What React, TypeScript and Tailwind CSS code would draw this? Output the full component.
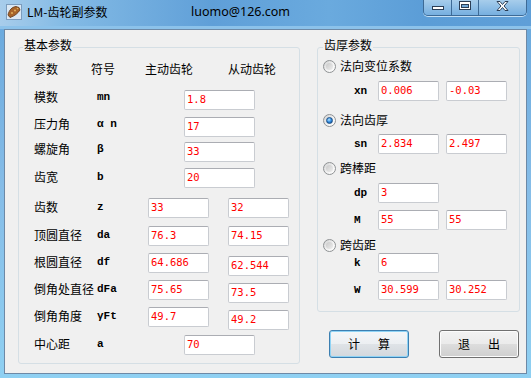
import React from 'react'

const cjk = "font-['Noto_Sans_CJK_SC',sans-serif]"
const mono = "font-['Liberation_Mono',monospace] font-bold"

type LeftRow = {
  label: string
  sym: string
  mid?: string
  a?: string
  b?: string
  rowMt: string
  labelMt: string
  shift?: boolean
}

const leftRows: LeftRow[] = [
  { label: '模数', sym: 'mn', mid: '1.8', rowMt: 'mt-[14px]', labelMt: 'mt-0' },
  { label: '压力角', sym: 'α n', mid: '17', rowMt: 'mt-[7px]', labelMt: 'mt-0' },
  { label: '螺旋角', sym: 'β', mid: '33', rowMt: 'mt-[5px]', labelMt: 'mt-0' },
  { label: '齿宽', sym: 'b', mid: '20', rowMt: 'mt-[6px]', labelMt: 'mt-[2px]' },
  { label: '齿数', sym: 'z', a: '33', b: '32', rowMt: 'mt-[10px]', labelMt: 'mt-[2px]' },
  { label: '顶圆直径', sym: 'da', a: '76.3', b: '74.15', rowMt: 'mt-[8px]', labelMt: 'mt-[2px]' },
  { label: '根圆直径', sym: 'df', a: '64.686', b: '62.544', rowMt: 'mt-[7px]', labelMt: 'mt-[2px]', shift: true },
  { label: '倒角处直径', sym: 'dFa', a: '75.65', b: '73.5', rowMt: 'mt-[4px]', labelMt: 'mt-[2px]', shift: true },
  { label: '倒角角度', sym: 'γFt', a: '49.7', b: '49.2', rowMt: 'mt-[4px]', labelMt: 'mt-[2px]', shift: true },
  { label: '中心距', sym: 'a', mid: '70', rowMt: 'mt-[5px]', labelMt: 'mt-[2px]' },
]

function Field({ value, className = '' }: { value: string; className?: string }) {
  return (
    <input
      readOnly
      defaultValue={value}
      className={`h-[20px] shrink-0 rounded-[2px] border border-[#c9ccd1] border-t-[#abadb3] bg-white px-[2px] pb-[2px] text-[10.5px] leading-[16px] text-[#ff0000] outline-none font-['DejaVu_Sans_Mono',monospace] ${className}`}
    />
  )
}

function Radio({ checked = false }: { checked?: boolean }) {
  return (
    <span className="flex h-[13px] w-[13px] shrink-0 items-center justify-center rounded-full border border-[#8f9294] bg-[linear-gradient(135deg,#cfd0d1,#f3f3f3_55%,#ffffff)]">
      {checked ? (
        <span className="h-[7px] w-[7px] rounded-full border border-[#1c4f86] bg-[radial-gradient(circle_at_40%_35%,#b8e6ff,#2f8ae0_50%,#0d3f7e)]" />
      ) : (
        <span className="h-[7px] w-[7px] rounded-full bg-[linear-gradient(135deg,#c9c9c9,#eeeeee)]" />
      )}
    </span>
  )
}

function WinButtons() {
  return (
    <div className="mr-[4px] ml-auto flex h-[16px] overflow-hidden rounded-b-[5px] border border-t-0 border-[#3d6a96] shadow-[0_1px_0_#c4e0f5]">
      <div className="flex w-[28px] items-start justify-center border-r border-[#3d6a96] bg-[linear-gradient(#a7cdeb,#76afe0)] pt-[6px]">
        <svg width="12" height="4" viewBox="0 0 12 4">
          <rect x="0.5" y="0.5" width="11" height="3" fill="#fff" stroke="#2c3e55" />
        </svg>
      </div>
      <div className="flex w-[27px] items-start justify-center border-r border-[#3d6a96] bg-[linear-gradient(#a7cdeb,#76afe0)] pt-[1px]">
        <svg width="12" height="9" viewBox="0 0 12 9">
          <rect x="0.5" y="0.5" width="11" height="8" fill="#fff" stroke="#2c3e55" />
          <rect x="2.5" y="3.5" width="7" height="3" fill="#6fa8d9" stroke="#2c3e55" />
        </svg>
      </div>
      <div className="flex w-[47px] items-start justify-center bg-[linear-gradient(#a7cdeb,#76afe0)] pt-[1px]">
        <svg width="13" height="10" viewBox="0 0 13 10">
          <path d="M1 0.5h3l2.5 3 2.5-3h3l-4 4.5 4 4.5h-3l-2.5-3-2.5 3h-3l4-4.5z" fill="#fff" stroke="#2c3e55" strokeLinejoin="round" />
        </svg>
      </div>
    </div>
  )
}

function AppIcon() {
  return (
    <svg width="16" height="16" viewBox="0 0 16 16" className="mt-[4px] ml-[6px] shrink-0">
      <rect x="0.5" y="0.5" width="15" height="15" fill="#dbe8f4" stroke="#7c9cbc" />
      <path d="M2 11 C3 6 6 3 10 2.5 L13 3.5 L14 6 C12 9 9 12 4 13.5 Z" fill="#a8642a" stroke="#5e3512" strokeWidth="0.8" />
      <circle cx="6" cy="9" r="1" fill="#e2b15c" />
      <circle cx="9" cy="6.5" r="1" fill="#e2b15c" />
      <circle cx="11.5" cy="4.5" r="0.8" fill="#e2b15c" />
    </svg>
  )
}

export default function App() {
  return (
    <div className="flex h-[378px] w-[531px] flex-col overflow-hidden bg-[linear-gradient(180deg,#67a7dc_0%,#86bde8_50%,#8fd0f2_100%)]">
      {/* title bar */}
      <div className="flex h-[29px] shrink-0 items-start bg-[linear-gradient(90deg,#a8cdeb_0%,#84bbe5_12%,#5f9fd8_40%,#6aaade_62%,#5b9dd7_80%,#5f9fd8_100%)] shadow-[inset_0_-3px_0_#8cc2ea]">
        <AppIcon />
        <span className={`mt-[4px] ml-[5px] w-[164px] text-[12px] leading-[16px] text-black ${cjk}`}>LM-齿轮副参数</span>
        <span className="mt-[4px] text-[12.5px] leading-[16px] text-black font-['Noto_Sans',sans-serif]">luomo@126.com</span>
        <WinButtons />
      </div>

      {/* client area */}
      <div className={`mx-[4px] flex h-[345px] shrink-0 border border-[#6d89a6] bg-[#f0f0f0] text-black ${cjk}`}>
        {/* 基本参数 */}
        <div className="mt-[17px] ml-[13px] w-[282px] self-start rounded-[3px] border border-[#d5dfe5] pb-[8px]">
          <div className="-mt-[10px] ml-[4px] w-fit bg-[#f0f0f0] px-[1px] text-[12px] leading-[14px]">基本参数</div>
          <div className="mt-[10px] flex pl-[15px] text-[12px] leading-[14px]">
            <span className="w-[57px]">参数</span>
            <span className="w-[54px]">符号</span>
            <span className="w-[83px]">主动齿轮</span>
            <span>从动齿轮</span>
          </div>
          {leftRows.map((r) => (
            <div key={r.label} className={`flex items-start pl-[15px] ${r.rowMt}`}>
              <span className={`w-[63px] shrink-0 text-[12px] leading-[14px] ${r.labelMt}`}>{r.label}</span>
              <span className={`w-[51px] shrink-0 text-[11px] leading-[14px] ${mono} ${r.labelMt}`}>{r.sym}</span>
              {r.mid !== undefined ? (
                <Field value={r.mid} className="ml-[36px] w-[71px]" />
              ) : (
                <>
                  <Field value={r.a ?? ''} className="w-[61px]" />
                  <Field value={r.b ?? ''} className={`ml-[19px] w-[61px] ${r.shift ? 'mt-[3px]' : ''}`} />
                </>
              )}
            </div>
          ))}
        </div>

        {/* right column */}
        <div className="ml-[17px] flex w-[203px] flex-col">
          <div className="mt-[17px] rounded-[3px] border border-[#d5dfe5] pb-[11px]">
            <div className="-mt-[10px] ml-[5px] w-fit bg-[#f0f0f0] px-[1px] text-[12px] leading-[14px]">齿厚参数</div>

            <div className="mt-[7px] flex h-[14px] items-center pl-[5px]">
              <Radio />
              <span className="ml-[4px] text-[12px] leading-[14px]">法向变位系数</span>
            </div>
            <div className="mt-[8px] flex items-center pl-[36px]">
              <span className={`w-[24px] text-[11px] ${mono}`}>xn</span>
              <Field value="0.006" className="w-[61px]" />
              <Field value="-0.03" className="ml-[7px] w-[61px]" />
            </div>

            <div className="mt-[12px] flex h-[14px] items-center pl-[5px]">
              <Radio checked />
              <span className="ml-[4px] text-[12px] leading-[14px]">法向齿厚</span>
            </div>
            <div className="mt-[7px] flex items-center pl-[36px]">
              <span className={`w-[24px] text-[11px] ${mono}`}>sn</span>
              <Field value="2.834" className="w-[61px]" />
              <Field value="2.497" className="ml-[7px] w-[61px]" />
            </div>

            <div className="mt-[7px] flex h-[14px] items-center pl-[5px]">
              <Radio />
              <span className="ml-[4px] text-[12px] leading-[14px]">跨棒距</span>
            </div>
            <div className="mt-[8px] flex items-center pl-[36px]">
              <span className={`w-[24px] text-[11px] ${mono}`}>dp</span>
              <Field value="3" className="w-[61px]" />
            </div>
            <div className="mt-[7px] flex items-center pl-[36px]">
              <span className={`w-[24px] text-[11px] ${mono}`}>M</span>
              <Field value="55" className="w-[61px]" />
              <Field value="55" className="ml-[7px] w-[61px]" />
            </div>

            <div className="mt-[8px] flex h-[14px] items-center pl-[5px]">
              <Radio />
              <span className="ml-[4px] text-[12px] leading-[14px]">跨齿距</span>
            </div>
            <div className="mt-[1px] flex items-center pl-[36px]">
              <span className={`w-[24px] text-[11px] ${mono}`}>k</span>
              <Field value="6" className="w-[61px]" />
            </div>
            <div className="mt-[7px] flex items-center pl-[36px]">
              <span className={`w-[24px] text-[11px] ${mono}`}>W</span>
              <Field value="30.599" className="w-[61px]" />
              <Field value="30.252" className="ml-[7px] w-[61px]" />
            </div>
          </div>

          <div className="mt-[18px] flex">
            <button className="ml-[12px] flex h-[28px] w-[80px] items-center justify-center gap-[18px] rounded-[3px] border border-[#3c7fb1] bg-[linear-gradient(#f4f6f8_0%,#eceff2_50%,#dfe3e7_50%,#d3d8dd_100%)] text-[12px] shadow-[inset_0_0_0_1px_#8fd3f5]">
              <span>计</span>
              <span>算</span>
            </button>
            <button className="ml-[30px] flex h-[28px] w-[80px] items-center justify-center gap-[18px] rounded-[3px] border border-[#707070] bg-[linear-gradient(#f2f2f2_0%,#ebebeb_50%,#dddddd_50%,#cfcfcf_100%)] text-[12px] shadow-[inset_0_0_0_1px_#fcfcfc]">
              <span>退</span>
              <span>出</span>
            </button>
          </div>
        </div>
      </div>
    </div>
  )
}
